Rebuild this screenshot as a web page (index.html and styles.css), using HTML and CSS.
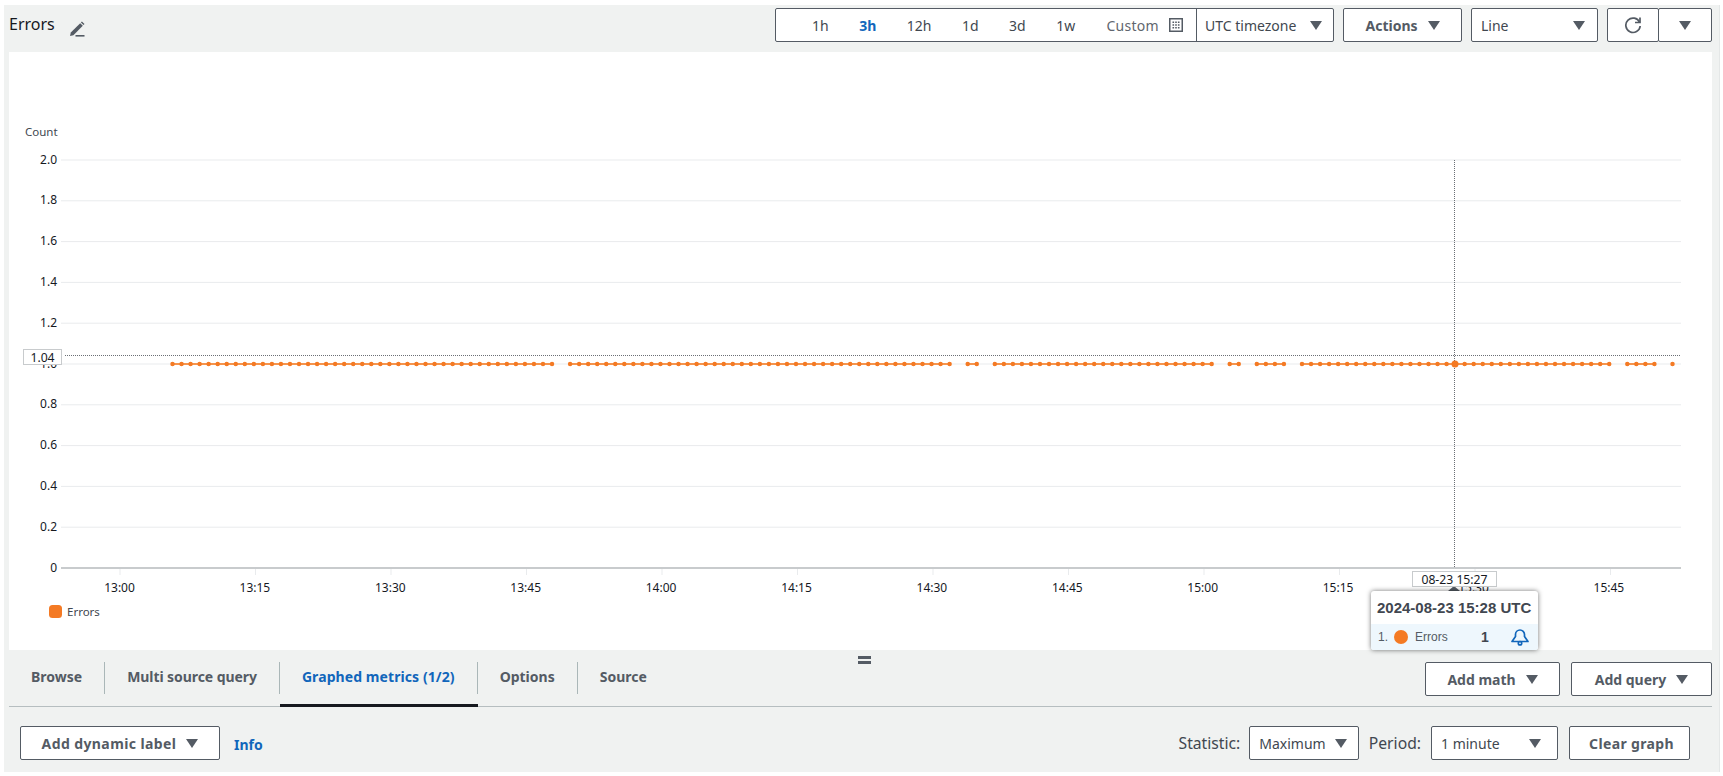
FILE: index.html
```html
<!DOCTYPE html>
<html lang="en">
<head>
<meta charset="utf-8">
<title>Errors</title>
<link rel="stylesheet" href="styles.css">
</head>
<body>
<main class="panel">
  <header class="toolbar">
    <div class="title">
      <h1>Errors</h1>
      <svg class="pencil" width="16" height="16" viewBox="0 0 16 16"><path d="M1 15l.8-3.4L11.2 2.2l2.6 2.6-9.4 9.4z"/><path d="M11.9 1.5l1-1 2.6 2.6-1 1z"/><rect x="6.5" y="14" width="9" height="1.6"/></svg>
    </div>
    <div class="range-group">
      <div class="ranges">
        <span>1h</span><span class="current">3h</span><span>12h</span><span>1d</span><span>3d</span><span>1w</span>
        <span class="custom">Custom
          <svg class="calendar" width="14" height="14" viewBox="0 0 14 14"><rect x=".75" y=".75" width="12.5" height="12.5" fill="none" stroke="#545b64" stroke-width="1.5"/><path d="M3.5 3.5h1.6v1.6H3.500zM6.200 3.500h1.600v1.600H6.200zM8.900 3.500h1.600v1.600H8.900zM3.500 6.200h1.600v1.600H3.500zM6.200 6.200h1.600v1.600H6.200zM8.900 6.200h1.600v1.600H8.900zM3.500 8.900h1.600v1.600H3.500zM6.200 8.900h1.600v1.600H6.200zM8.900 8.900h1.600v1.600H8.900z" fill="#545b64"/></svg>
        </span>
      </div>
      <div class="timezone">UTC timezone <i class="caret"></i></div>
    </div>
    <button class="btn actions">Actions <i class="caret"></i></button>
    <div class="select line-type">Line <i class="caret"></i></div>
    <div class="refresh-group">
      <button class="btn refresh" aria-label="Refresh"><svg width="18" height="18" viewBox="0 0 18 18" fill="none" stroke="#545b64" stroke-width="1.7"><path d="M16 1.500v5h-5"/><path d="M15.600 6.300A7.200 7.200 0 1 0 16.200 10"/></svg></button>
      <button class="btn refresh-menu" aria-label="Refresh options"><i class="caret"></i></button>
    </div>
  </header>

  <section class="chart">
    <svg class="plot" width="1703" height="599" viewBox="9 52 1703 599">
      <g class="grid">
        <path d="M61 160H1681M61 200.800H1681M61 241.600H1681M61 282.400H1681M61 323.200H1681M61 364H1681M61 404.800H1681M61 445.600H1681M61 486.400H1681M61 527.200H1681"/>
        <path d="M120 569v6M255.500 569v6M391 569v6M526.500 569v6M662 569v6M797.500 569v6M933 569v6M1068.500 569v6M1204 569v6M1339.500 569v6M1475 569v6M1610.500 569v6"/>
      </g>
      <path class="axis" d="M61 568H1681"/>
      <text class="unit" x="25" y="136">Count</text>
      <g class="ylabels">
        <text x="57" y="164">2.0</text><text x="57" y="204">1.8</text><text x="57" y="245">1.6</text><text x="57" y="286">1.4</text><text x="57" y="327">1.2</text><text x="57" y="368">1.0</text><text x="57" y="408">0.8</text><text x="57" y="449">0.6</text><text x="57" y="490">0.4</text><text x="57" y="531">0.2</text><text x="57" y="572">0</text>
      </g>
      <g class="xlabels">
        <text x="119.500" y="592">13:00</text><text x="254.900" y="592">13:15</text><text x="390.300" y="592">13:30</text><text x="525.700" y="592">13:45</text><text x="661.100" y="592">14:00</text><text x="796.500" y="592">14:15</text><text x="931.900" y="592">14:30</text><text x="1067.300" y="592">14:45</text><text x="1202.700" y="592">15:00</text><text x="1338.100" y="592">15:15</text><text x="1473.500" y="592">15:30</text><text x="1608.900" y="592">15:45</text>
      </g>
      <path class="series-line" d="M172.500 364H552M570.100 364H949.600M967.700 364H976.700M994.800 364H1211.600M1229.700 364H1238.700M1256.800 364H1283.900M1302 364H1609.200M1627.300 364H1654.400"/>
      <path class="series-dots" d="M172.500 364H552.100M570.100 364H949.700M967.700 364H976.800M994.800 364H1211.700M1229.700 364H1238.800M1256.800 364H1284M1302 364H1609.300M1627.300 364H1654.500M1672.500 364h.1"/>
      <path class="cross" d="M65 355.500H1680M1454.500 160V568"/>
      <circle class="active-dot" cx="1455" cy="364" r="3.500"/>
      <rect class="tag" x="23.500" y="349.500" width="38" height="15"/>
      <text class="tag-text" x="42.500" y="361.500">1.04</text>
      <path class="pointer" d="M1448 591l6-5 6 5z"/>
      <rect class="tag" x="1412.500" y="571.500" width="84" height="15"/>
      <text class="tag-text" x="1454.500" y="583.500">08-23 15:27</text>
      <rect class="legend-key" x="49" y="605" width="13" height="13" rx="3.500"/>
      <text class="legend-text" x="67" y="616">Errors</text>
    </svg>
    <aside class="tooltip">
      <div class="tip-title">2024-08-23 15:28 UTC</div>
      <div class="tip-row">
        <span class="tip-num">1.</span><i class="tip-dot"></i><span class="tip-name">Errors</span><b class="tip-value">1</b>
        <svg class="bell" width="18" height="18" viewBox="0 0 18 18" fill="none" stroke="#1166bb" stroke-width="1.700" stroke-linejoin="round"><path d="M1 13.500h16l-3.500-5V6.500a4.500 4.500 0 0 0-9 0v2z"/><circle cx="9" cy="15.200" r="1.700"/></svg>
      </div>
    </aside>
  </section>

  <nav class="tabbar">
    <a class="tab"><span>Browse</span></a>
    <a class="tab multi"><span>Multi source query</span></a>
    <a class="tab active"><span>Graphed metrics (1/2)</span></a>
    <a class="tab"><span>Options</span></a>
    <a class="tab last"><span>Source</span></a>
    <div class="splitter"></div>
    <div class="tab-actions">
      <button class="btn add-math">Add math <i class="caret"></i></button>
      <button class="btn add-query">Add query <i class="caret"></i></button>
    </div>
  </nav>

  <div class="controls">
    <button class="btn dynamic">Add dynamic label <i class="caret"></i></button>
    <a class="info">Info</a>
    <div class="control-right">
      <label>Statistic:</label>
      <div class="select statistic">Maximum <i class="caret"></i></div>
      <label class="period-label">Period:</label>
      <div class="select period">1 minute <i class="caret"></i></div>
      <button class="btn clear">Clear graph</button>
    </div>
  </div>
</main>
</body>
</html>
```
FILE: styles.css
```css
* { box-sizing: border-box; }
html, body { margin: 0; padding: 0; background: #fff; }
body {
  font-family: "Noto Sans", "Open Sans", sans-serif;
  font-size: 14px;
  color: #414750;
  overflow: hidden;
}
.panel {
  width: 1716px;
  height: 767px;
  margin: 5px 0 0 4px;
  background: #f0f2f1;
  border-right: 1px solid #e4e7e7;
}
.toolbar {
  height: 48px;
  padding: 3px 7px 0 5px;
  display: flex;
  align-items: flex-start;
}
.title { display: flex; align-items: center; margin-right: auto; height: 24px; margin-top: 4px; }
h1 { margin: 0; font-size: 16px; font-weight: 400; color: #16191f; line-height: 24px; }
.pencil { margin: 9px 0 0 14px; fill: #545b64; }
.caret {
  display: inline-block;
  width: 0; height: 0;
  border-left: 6px solid transparent;
  border-right: 6px solid transparent;
  border-top: 9px solid #545b64;
}
.btn, .select, .range-group {
  height: 34px;
  border: 1px solid #545b64;
  border-radius: 2px;
  background: #fff;
  font-family: inherit;
  font-size: 14px;
}
.btn {
  display: flex; align-items: center; justify-content: center; gap: 10px;
  font-weight: 700; color: #545b64; padding: 0; cursor: pointer;
}
.select {
  display: flex; align-items: center; justify-content: space-between;
  color: #414750; padding: 0 11px 0 9px;
}
.range-group { display: flex; width: 559px; color: #414750; }
.ranges { display: flex; align-items: center; gap: 30.500px; padding: 0 13px 0 36px; width: 421px; border-right: 1px solid #545b64; }
.current { color: #1166bb; font-weight: 700; }
.custom { display: flex; align-items: center; gap: 10px; color: #5f666e; margin-left: auto; letter-spacing: .3px; }
.timezone { flex: 1; display: flex; align-items: center; justify-content: space-between; padding: 0 11px 0 8px; }
.actions { width: 119px; margin-left: 9px; }
.line-type { width: 127px; margin-left: 9px; padding-right: 12px; }
.refresh-group { display: flex; margin-left: 9px; }
.refresh { width: 52px; }
.refresh-menu { width: 54px; margin-left: -1px; }

.chart { position: relative; width: 1703px; height: 598px; margin-left: 5px; background: #fff; }
.plot { display: block; margin-top: -1px; font-family: "Noto Sans", "Open Sans", sans-serif; font-size: 12px; }
.grid path { fill: none; stroke: #e9ebed; stroke-width: 1; }
.axis { fill: none; stroke: #c8cbcd; stroke-width: 2; }
.unit { fill: #414750; font-size: 11.500px; }
.ylabels text { text-anchor: end; fill: #16191f; }
.xlabels text { text-anchor: middle; fill: #16191f; }
.series-line { fill: none; stroke: #f5822f; stroke-width: 2; opacity: .85; }
.series-dots { fill: none; stroke: #f47a24; stroke-width: 4.500; stroke-linecap: round; stroke-dasharray: 0 9.036; }
.cross { fill: none; stroke: #6a6f75; stroke-width: 1; stroke-dasharray: 1 1; shape-rendering: crispEdges; }
.active-dot { fill: #f47a24; }
.tag { fill: #fff; stroke: #c8cbcd; stroke-width: 1; }
.tag-text { fill: #16191f; font-size: 12.200px; text-anchor: middle; }
.pointer { fill: #545b64; }
.legend-key { fill: #f47a24; }
.legend-text { fill: #414750; font-size: 11.500px; }

.tooltip {
  position: absolute; left: 1362px; top: 539px;
  width: 167px; height: 59px;
  background: #fff; border-radius: 3px;
  box-shadow: 0 0 5px rgba(0,0,0,.55);
  font-family: "Liberation Sans", Arial, sans-serif;
  overflow: hidden;
}
.tip-title { height: 33px; padding: 9px 0 0 6px; font-size: 15px; font-weight: 700; color: #414750; line-height: 16px; }
.tip-row { height: 26px; background: #eef7fd; display: flex; align-items: center; padding-left: 7px; padding-bottom: 1px; font-size: 12px; color: #545b64; }
.tip-dot { width: 14px; height: 14px; border-radius: 50%; background: #f47a24; margin-left: 6px; }
.tip-name { margin-left: 7px; width: 66px; }
.tip-value { color: #414750; font-size: 14px; width: 22px; }
.bell { margin-left: 8px; }

.tabbar {
  position: relative;
  height: 57px;
  margin: 0 7px 0 5px;
  display: flex;
  align-items: flex-start;
  border-bottom: 1px solid #b6bec0;
}
.tab { display: block; padding: 12px 0 10px; border-bottom: 3px solid transparent; margin-bottom: -1px; }
.tab span {
  display: block; height: 32px; line-height: 30px;
  padding: 0 22px;
  border-right: 1px solid #aab7b8;
  font-weight: 700; color: #545b64;
}
.tab.multi span { letter-spacing: -.07px; }
.tab.last span { border-right: 0; }
.tab.active { border-bottom-color: #16191f; }
.tab.active span { color: #1166bb; letter-spacing: .08px; }
.splitter {
  position: absolute; left: 849px; top: 6px;
  width: 13px; height: 8px;
  border-top: 3px solid #545b64; border-bottom: 3px solid #545b64;
}
.tab-actions { margin-left: auto; display: flex; gap: 11px; padding-top: 12px; }
.add-math { width: 135px; }
.add-query { width: 141px; }

.controls { display: flex; align-items: flex-start; padding: 19px 29px 0 16px; }
.dynamic { width: 200px; letter-spacing: .4px; }
.info { margin: 9px 0 0 14px; font-weight: 700; color: #1166bb; line-height: 20px; }
.control-right { margin-left: auto; display: flex; align-items: center; height: 34px; }
.control-right label { font-size: 15.700px; }
.statistic { width: 110px; margin-left: 9px; }
.control-right .period-label { margin-left: 9.500px; }
.period { width: 127px; margin-left: 10px; padding-right: 16px; }
.clear { width: 121px; margin-left: 11px; padding-left: 4px; letter-spacing: .35px; }
```
